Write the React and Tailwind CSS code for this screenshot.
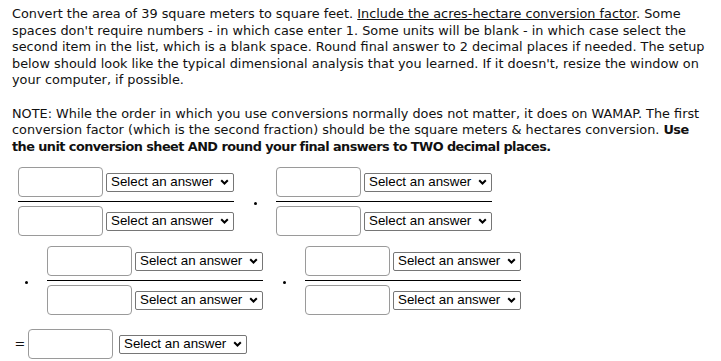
function Select() {
  return (
    <div
      className="flex h-[19px] w-[128px] shrink-0 items-center justify-between rounded-[2px] border border-[#767676] bg-white pl-[4px] pr-[4px] text-[13.33px] leading-none text-black"
      style={{ fontFamily: "'Liberation Sans', Arial, sans-serif" }}
    >
      <span>Select an answer</span>
      <svg width="9" height="6" viewBox="0 0 9 6" className="shrink-0">
        <polyline points="1.2,1.2 4.5,4.5 7.8,1.2" fill="none" stroke="#000" strokeWidth="2" />
      </svg>
    </div>
  );
}

function Input() {
  return <div className="h-[30px] w-[85px] shrink-0 rounded-[4px] border border-[#9a9a9a] bg-white" />;
}

function Fraction() {
  return (
    <div className="flex shrink-0 flex-col px-[5px]">
      <div className="flex items-center gap-[3px] border-b border-black pb-[4px]">
        <Input />
        <Select />
      </div>
      <div className="flex items-center gap-[3px] pt-[4px]">
        <Input />
        <Select />
      </div>
    </div>
  );
}

function Dot() {
  return <div className="ml-[15px] mr-[14px] mt-[3px] h-[3px] w-[3px] shrink-0 rounded-full bg-black" />;
}

export default function App() {
  return (
    <div
      className="h-[361px] w-[721px] overflow-hidden bg-white text-[12.85px] leading-[16.5px] text-[#111]"
      style={{ fontFamily: "'DejaVu Sans', Tahoma, sans-serif" }}
    >
      <div className="pl-[12px] pt-[6px] whitespace-nowrap">
        <div>
          Convert the area of 39 square meters to square feet.{" "}
          <span className="underline">Include the acres-hectare conversion factor</span>. Some
        </div>
        <div>spaces don't require numbers - in which case enter 1. Some units will be blank - in which case select the</div>
        <div>second item in the list, which is a blank space. Round final answer to 2 decimal places if needed. The setup</div>
        <div>below should look like the typical dimensional analysis that you learned. If it doesn't, resize the window on</div>
        <div>your computer, if possible.</div>
      </div>
      <div className="mt-[17px] pl-[12px] whitespace-nowrap">
        <div>NOTE: While the order in which you use conversions normally does not matter, it does on WAMAP. The first</div>
        <div>
          conversion factor (which is the second fraction) should be the square meters &amp; hectares conversion.{" "}
          <span className="font-bold tracking-[-0.55px]">Use</span>
        </div>
        <div className="font-bold tracking-[-0.55px]">
          the unit conversion sheet AND round your final answers to TWO decimal places.
        </div>
      </div>
      <div className="mt-[12px] flex items-center pl-[13px]">
        <Fraction />
        <Dot />
        <Fraction />
      </div>
      <div className="mt-[10px] flex items-center pl-[10px]">
        <Dot />
        <Fraction />
        <Dot />
        <Fraction />
      </div>
      <div className="mt-[14px] flex items-center pl-[14px]">
        <span className="w-[12px] text-center">=</span>
        <div className="ml-[2px]">
          <Input />
        </div>
        <div className="ml-[6px]">
          <Select />
        </div>
      </div>
    </div>
  );
}
